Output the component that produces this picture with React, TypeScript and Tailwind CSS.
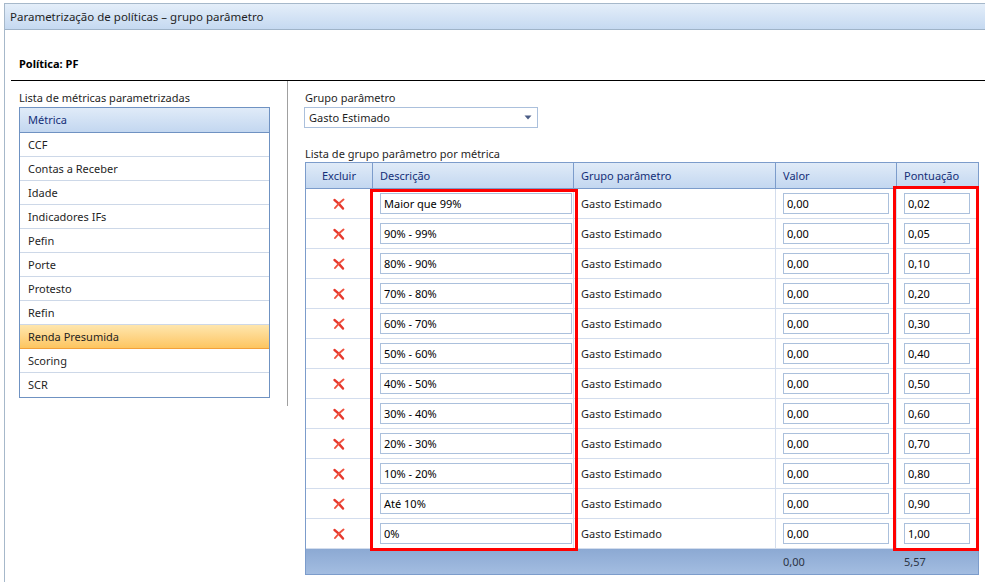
import React from 'react';

const metricas = [
  'CCF',
  'Contas a Receber',
  'Idade',
  'Indicadores IFs',
  'Pefin',
  'Porte',
  'Protesto',
  'Refin',
  'Renda Presumida',
  'Scoring',
  'SCR',
];

const faixas: [string, string][] = [
  ['Maior que 99%', '0,02'],
  ['90% - 99%', '0,05'],
  ['80% - 90%', '0,10'],
  ['70% - 80%', '0,20'],
  ['60% - 70%', '0,30'],
  ['50% - 60%', '0,40'],
  ['40% - 50%', '0,50'],
  ['30% - 40%', '0,60'],
  ['20% - 30%', '0,70'],
  ['10% - 20%', '0,80'],
  ['Até 10%', '0,90'],
  ['0%', '1,00'],
];

const cols = 'grid grid-cols-[67px_201px_202px_121px_1fr]';

function DeleteIcon() {
  return (
    <svg width="14" height="14" viewBox="0 0 14 14">
      <path d="M2.5 3 C6 5.5 8.8 8.8 11 11.5" stroke="#e6382c" strokeWidth="2.4" strokeLinecap="round" fill="none" />
      <path d="M11.5 2.5 C8 5 5.2 8.2 3 11" stroke="#ef5240" strokeWidth="2" strokeLinecap="round" fill="none" />
    </svg>
  );
}

function Field({ value, width }: { value: string; width: string }) {
  return (
    <div className={`${width} ml-[7px] mt-[4px] h-[21px] border border-[#abc0dc] bg-white pl-[3px] text-black leading-[19px]`}>
      {value}
    </div>
  );
}

export default function App() {
  return (
    <div
      className="relative w-[985px] h-[582px] overflow-hidden bg-white text-[11px] leading-[16px] text-[#1f1f1f]"
      style={{ fontFamily: '"Noto Sans", "Open Sans", sans-serif' }}
    >
      <div className="mt-[3px] ml-[4px] h-[579px] border-t border-l border-[#a6b8ca] flex flex-col">
        {/* Title bar */}
        <div className="h-[26px] border-b border-[#9fb3c8] bg-gradient-to-b from-[#e4eef9] to-[#c5d9f1] pl-[5px] flex items-center text-[11.5px]">
          Parametrização de políticas – grupo parâmetro
        </div>

        <div className="h-[50px] pl-[14px] pb-[8px] flex items-end font-bold text-black">Política: PF</div>
        <div className="ml-[6px] h-px bg-black" />

        <div className="flex">
          {/* Left column */}
          <div className="w-[283px] h-[325px] border-r border-[#a0a0a0] pl-[14px] pt-[9px]">
            <div className="h-[16px]">Lista de métricas parametrizadas</div>
            <div className="mt-px w-[251px] border border-[#6f92c2]">
              <div className="h-[25px] border-b border-[#6f92c2] bg-gradient-to-b from-[#e0ebf8] to-[#c3d7f0] pl-[8px] flex items-center text-[#142f78]">
                Métrica
              </div>
              {metricas.map((m, i) => {
                const selected = m === 'Renda Presumida';
                const last = i === metricas.length - 1;
                return (
                  <div
                    key={m}
                    className={
                      selected
                        ? 'h-[24px] pl-[8px] flex items-center border-b border-[#f2a03a] bg-gradient-to-b from-[#fee6ad] to-[#fdc55f]'
                        : `h-[24px] pl-[8px] flex items-center ${last ? '' : 'border-b border-[#cdd8e8]'}`
                    }
                  >
                    {m}
                  </div>
                );
              })}
            </div>
          </div>

          {/* Right column */}
          <div className="pl-[16px] pt-[9px]">
            <div className="h-[16px] ml-px">Grupo parâmetro</div>
            <div className="mt-px w-[234px] h-[21px] border border-[#abc0dc] pl-[4px] flex items-center justify-between pr-[5px]">
              <span>Gasto Estimado</span>
              <svg width="8" height="5" viewBox="0 0 8 5">
                <path d="M0.5 0.5 H7.5 L4 4.5 Z" fill="#4b5d86" />
              </svg>
            </div>

            <div className="mt-[18px] h-[16px] ml-px">Lista de grupo parâmetro por métrica</div>

            <div className="ml-px w-[674px] border border-[#7c9ccb]">
              <div className={`${cols} h-[26px] border-b border-[#7c9ccb] bg-gradient-to-b from-[#e0ebf8] to-[#c3d7f0] text-[#142f78]`}>
                <div className="border-r border-[#7c9ccb] flex items-center justify-center">Excluir</div>
                <div className="border-r border-[#7c9ccb] flex items-center pl-[7px]">Descrição</div>
                <div className="border-r border-[#7c9ccb] flex items-center pl-[7px]">Grupo parâmetro</div>
                <div className="border-r border-[#7c9ccb] flex items-center pl-[7px]">Valor</div>
                <div className="flex items-center pl-[7px]">Pontuação</div>
              </div>

              {faixas.map(([desc, pont]) => (
                <div key={desc} className={`${cols} h-[30px] border-b border-[#d3dded]`}>
                  <div className="border-r border-[#d3dded] flex items-center justify-center">
                    <DeleteIcon />
                  </div>
                  <div className="border-r border-[#d3dded]">
                    <Field value={desc} width="w-[192px]" />
                  </div>
                  <div className="border-r border-[#d3dded] flex items-center pl-[7px]">Gasto Estimado</div>
                  <div className="border-r border-[#d3dded]">
                    <Field value="0,00" width="w-[106px]" />
                  </div>
                  <div>
                    <Field value={pont} width="w-[66px]" />
                  </div>
                </div>
              ))}

              <div className={`${cols} h-[25px] bg-gradient-to-b from-[#8ca9d3] to-[#a3bde1] text-[#2b3444]`}>
                <div />
                <div />
                <div />
                <div className="flex items-center pl-[7px]">0,00</div>
                <div className="flex items-center pl-[7px]">5,57</div>
              </div>
            </div>
          </div>
        </div>
      </div>

      {/* Highlight annotations */}
      <div className="absolute left-[370px] top-[189px] w-[208px] h-[362px] border-[3px] border-[#ff0000]" />
      <div className="absolute left-[893px] top-[186px] w-[86px] h-[365px] border-[3px] border-[#ff0000]" />
    </div>
  );
}
